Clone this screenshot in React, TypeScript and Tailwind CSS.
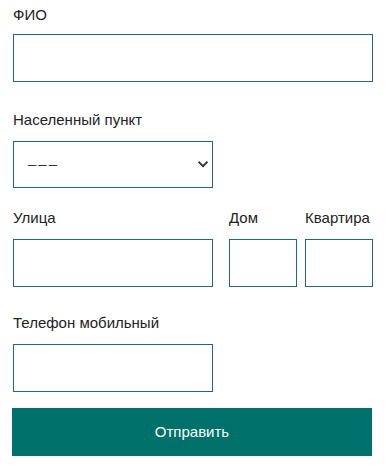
import { useState } from "react";

const labelCls = "block h-5 text-[15px] leading-5 text-[#222]";
const inputCls =
  "block h-12 border border-[#1f6d69] bg-white px-3 text-[15px] text-[#222] outline-none";

export default function App() {
  const [city, setCity] = useState("");

  return (
    <div
      className="min-h-[471px] w-[388px] bg-white pt-[5px] pr-[15px] pl-[13px]"
      style={{ fontFamily: '"Liberation Sans", Arial, sans-serif' }}
    >
      <form onSubmit={(e) => e.preventDefault()}>
        {/* ФИО */}
        <label className={labelCls}>ФИО</label>
        <input type="text" className={`${inputCls} mt-[9px] w-full`} />

        {/* Населенный пункт */}
        <label className={`${labelCls} mt-[28px]`}>Населенный пункт</label>
        <div className="relative mt-[11px] w-[200px]">
          <select
            value={city}
            onChange={(e) => setCity(e.target.value)}
            className="block h-[47px] w-full appearance-none border border-[#1f6d69] bg-white pl-[14px] text-[15px] tracking-[2px] text-[#333] outline-none"
          >
            <option value="">–––</option>
          </select>
          <svg
            className="pointer-events-none absolute top-[20px] right-[5px] h-[7px] w-[10px]"
            viewBox="0 0 10 7"
            fill="none"
          >
            <path
              d="M1.2 1.4 L5 5.2 L8.8 1.4"
              stroke="#333"
              strokeWidth="2"
              strokeLinecap="square"
            />
          </svg>
        </div>

        {/* Улица / Дом / Квартира */}
        <div className="mt-[20px] flex">
          <div className="w-[200px]">
            <label className={labelCls}>Улица</label>
            <input type="text" className={`${inputCls} mt-[11px] w-full`} />
          </div>
          <div className="ml-4 w-[68px]">
            <label className={labelCls}>Дом</label>
            <input type="text" className={`${inputCls} mt-[11px] w-full px-2`} />
          </div>
          <div className="ml-2 w-[68px]">
            <label className={`${labelCls} whitespace-nowrap`}>Квартира</label>
            <input type="text" className={`${inputCls} mt-[11px] w-full px-2`} />
          </div>
        </div>

        {/* Телефон */}
        <label className={`${labelCls} mt-[26px]`}>Телефон мобильный</label>
        <input type="tel" className={`${inputCls} mt-[11px] w-[200px]`} />

        <button
          type="submit"
          className="mt-4 -ml-px block h-12 w-[360px] bg-[#00716a] text-[15px] text-white"
        >
          Отправить
        </button>
      </form>
    </div>
  );
}
